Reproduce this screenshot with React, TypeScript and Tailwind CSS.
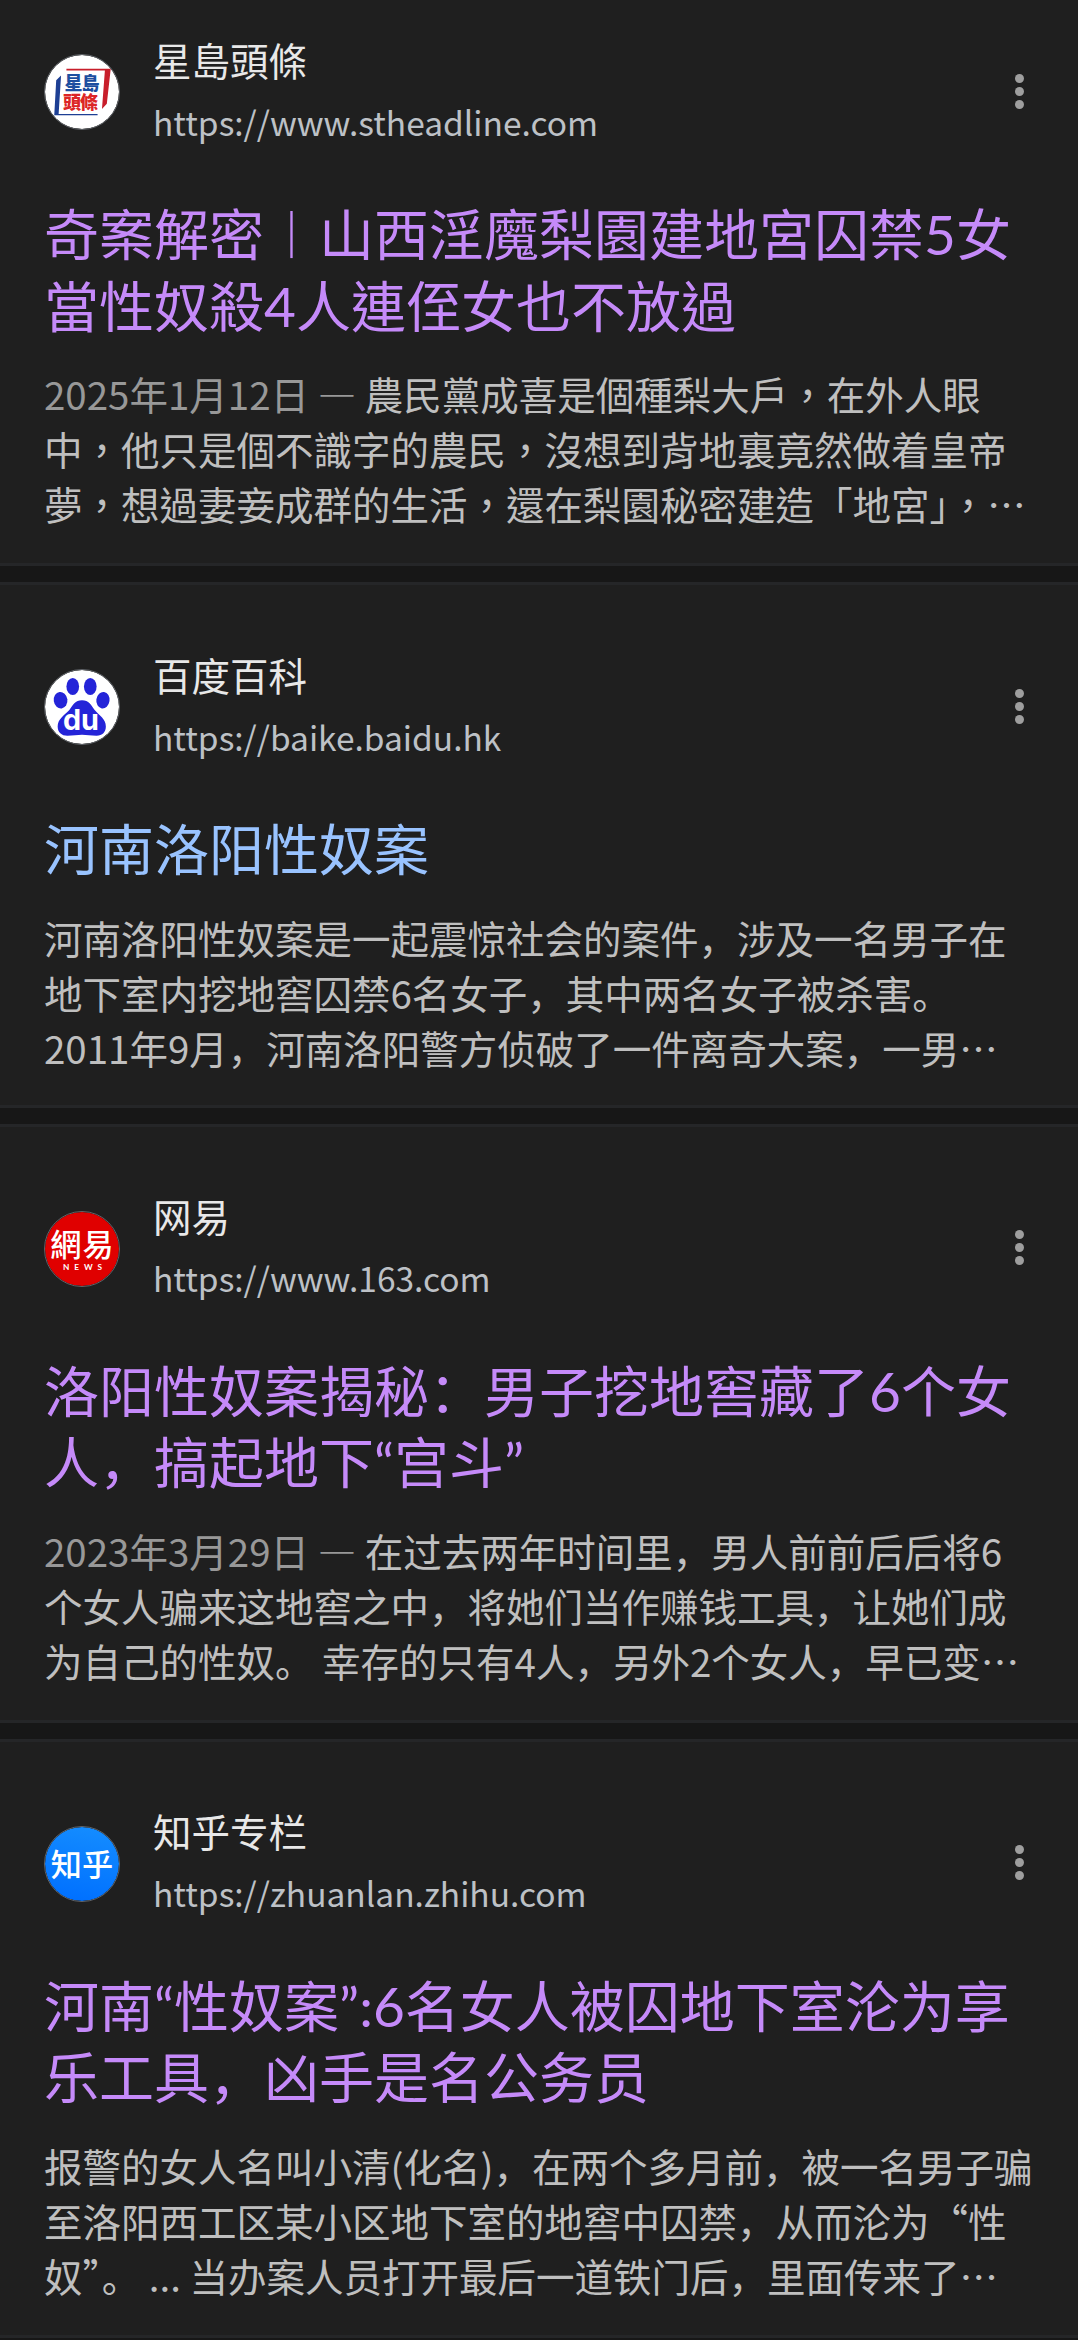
import type { ReactNode } from "react";

type Result = {
  site: string;
  url: string;
  lang: "zh-TW" | "zh-CN";
  icon: ReactNode;
  title: string[];
  visited: boolean;
  date?: string;
  snippet: string[];
};

function SingTaoIcon() {
  return (
    <svg className="size-full" viewBox="0 0 76 76">
      <circle cx="38" cy="38" r="38" fill="#fff" />
      <path d="M22 14H67.5L63.500 50L58.5 55.500L61.500 16H22Z" fill="#c81e2b" />
      <path d="M16.500 21L11.500 26L9.500 62H54V60.500H14Z" fill="#1d3f94" />
      <g
        fontFamily="'Noto Sans CJK TC', sans-serif"
        fontSize="18.500"
        fontWeight="900"
      >
        <text x="20" y="35.500" fill="#1d4fa0" textLength="36">
          星島
        </text>
        <text x="18.500" y="55.500" fill="#dc2626" textLength="36">
          頭條
        </text>
      </g>
    </svg>
  );
}

function BaiduIcon() {
  return (
    <svg className="size-full" viewBox="0 0 76 76">
      <circle cx="38" cy="38" r="38" fill="#fff" />
      <g fill="#2424d8">
        <ellipse cx="16" cy="31" rx="7" ry="8.500" transform="rotate(-8 16 31)" />
        <ellipse cx="28.500" cy="17" rx="6.500" ry="8.800" />
        <ellipse cx="46.500" cy="17" rx="6.500" ry="8.800" />
        <ellipse cx="59.500" cy="31" rx="6.800" ry="8.500" transform="rotate(8 59.500 31)" />
        <path d="M38 31C31 31 28.500 36 25 41C20.500 46 13 50 13 58C13 64 17 67.500 23 67.500C29 67.500 33 66.500 38 66.500S47 67.500 53 67.500C59 67.500 62.500 63.500 62.500 58C62.500 50 56 47 51 41C47.500 36 45 31 38 31Z" />
      </g>
      <text
        x="18.500"
        y="62"
        fill="#fff"
        fontFamily="Inter, sans-serif"
        fontSize="29"
        fontWeight="700"
        textLength="37"
        lengthAdjust="spacingAndGlyphs"
      >
        du
      </text>
    </svg>
  );
}

function NeteaseIcon() {
  return (
    <svg className="size-full" viewBox="0 0 76 76">
      <circle cx="38" cy="38" r="38" fill="#e00000" />
      <text
        x="5.500"
        y="45.500"
        fill="#fff"
        fontFamily="'Noto Sans CJK TC', sans-serif"
        fontSize="32"
        fontWeight="500"
        textLength="65"
      >
        網易
      </text>
      <text
        x="18.500"
        y="60"
        fill="#fff"
        fontFamily="Lato, sans-serif"
        fontSize="8.500"
        fontWeight="700"
        textLength="40"
      >
        NEWS
      </text>
    </svg>
  );
}

function ZhihuIcon() {
  return (
    <svg className="size-full" viewBox="0 0 76 76">
      <defs>
        <linearGradient id="zhihu" x1="0.6" y1="0" x2="0.4" y2="1">
          <stop offset="0" stopColor="#148cff" />
          <stop offset="1" stopColor="#0070ff" />
        </linearGradient>
      </defs>
      <circle cx="38" cy="38" r="38" fill="url(#zhihu)" />
      <text
        x="6"
        y="50"
        fill="#fff"
        fontFamily="'Noto Sans CJK SC', sans-serif"
        fontSize="32"
        fontWeight="500"
        textLength="64"
      >
        知乎
      </text>
    </svg>
  );
}

const results: Result[] = [
  {
    site: "星島頭條",
    url: "https://www.stheadline.com",
    lang: "zh-TW",
    icon: <SingTaoIcon />,
    title: ["奇案解密︱山西淫魔梨園建地宮囚禁5女", "當性奴殺4人連侄女也不放過"],
    visited: true,
    date: "2025年1月12日",
    snippet: [
      "農民黨成喜是個種梨大戶，在外人眼",
      "中，他只是個不識字的農民，沒想到背地裏竟然做着皇帝",
      "夢，想過妻妾成群的生活，還在梨園秘密建造「地宮」，…",
    ],
  },
  {
    site: "百度百科",
    url: "https://baike.baidu.hk",
    lang: "zh-CN",
    icon: <BaiduIcon />,
    title: ["河南洛阳性奴案"],
    visited: false,
    snippet: [
      "河南洛阳性奴案是一起震惊社会的案件，涉及一名男子在",
      "地下室内挖地窖囚禁6名女子，其中两名女子被杀害。",
      "2011年9月，河南洛阳警方侦破了一件离奇大案，一男…",
    ],
  },
  {
    site: "网易",
    url: "https://www.163.com",
    lang: "zh-CN",
    icon: <NeteaseIcon />,
    title: ["洛阳性奴案揭秘：男子挖地窖藏了6个女", "人，搞起地下“宫斗”"],
    visited: true,
    date: "2023年3月29日",
    snippet: [
      "在过去两年时间里，男人前前后后将6",
      "个女人骗来这地窖之中，将她们当作赚钱工具，让她们成",
      "为自己的性奴。 幸存的只有4人，另外2个女人，早已变…",
    ],
  },
  {
    site: "知乎专栏",
    url: "https://zhuanlan.zhihu.com",
    lang: "zh-CN",
    icon: <ZhihuIcon />,
    title: ["河南“性奴案”:6名女人被囚地下室沦为享", "乐工具，凶手是名公务员"],
    visited: true,
    snippet: [
      "报警的女人名叫小清(化名)，在两个多月前，被一名男子骗",
      "至洛阳西工区某小区地下室的地窖中囚禁，从而沦为“性",
      "奴”。 ... 当办案人员打开最后一道铁门后，里面传来了…",
    ],
  },
];

function ResultCard({ result }: { result: Result }) {
  const traditional = result.lang === "zh-TW";

  return (
    <article
      className={`border-y-3 border-[#252628] bg-[#1f1f1f] px-11 pt-[61px] whitespace-nowrap ${
        result.title.length > 1 ? "pb-8" : "pb-[30px]"
      } ${
        traditional
          ? "font-['Noto_Sans_CJK_TC',sans-serif]"
          : "font-['Noto_Sans_CJK_SC',sans-serif]"
      }`}
      lang={result.lang}
    >
      <header className="flex h-[120px] items-center">
        <div className="mt-0.5 size-[76px] shrink-0 overflow-hidden rounded-full border border-[#5f6368]">
          {result.icon}
        </div>
        <div className="ml-[33px] flex-1">
          <p className="text-[38.5px] leading-[60px] text-[#e8e8e8]">{result.site}</p>
          <p className="text-[33.5px] leading-[65px] text-[#bdc1c6]">{result.url}</p>
        </div>
        <button aria-label="More" className="mr-2.5 flex flex-col gap-1" type="button">
          <span className="size-[9px] rounded-full bg-[#9e9e9e]" />
          <span className="size-[9px] rounded-full bg-[#9e9e9e]" />
          <span className="size-[9px] rounded-full bg-[#9e9e9e]" />
        </button>
      </header>

      <h3
        className={`mt-12 text-[55px] leading-[71.5px] ${
          result.visited ? "text-[#c58af9]" : "text-[#99c3ff]"
        } ${
          traditional
            ? "font-[Lato,'Noto_Sans_CJK_TC',sans-serif]"
            : "font-[Lato,'Noto_Sans_CJK_SC',sans-serif]"
        }`}
      >
        {result.title.map((line) => (
          <span className="block" key={line}>
            {line}
          </span>
        ))}
      </h3>

      <p className="mt-6 text-[38.5px] leading-[55px] text-[#bfbfbf]">
        {result.snippet.map((line, i) => (
          <span className="block" key={line}>
            {i === 0 && result.date && (
              <span className="text-[#989898]">{result.date} — </span>
            )}
            {line}
          </span>
        ))}
      </p>
    </article>
  );
}

export default function App() {
  return (
    <main className="h-[2340px] overflow-hidden bg-[#171717]">
      <div className="-mt-[33px] flex flex-col gap-4">
        {results.map((result) => (
          <ResultCard key={result.url} result={result} />
        ))}
      </div>
    </main>
  );
}
